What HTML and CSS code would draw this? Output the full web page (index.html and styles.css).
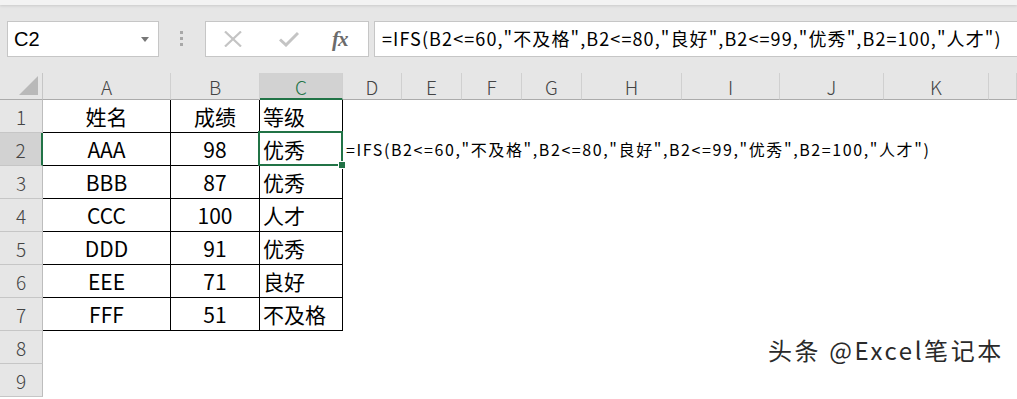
FILE: index.html
```html
<!DOCTYPE html>
<html lang="zh-CN">

<head>
    <meta charset="UTF-8">
    <meta name="viewport" content="width=device-width, initial-scale=1.0">
    <title>IFS 函数</title>
    <link rel="stylesheet" href="styles.css">
</head>

<body>
    <div class="ribbon-edge"></div>
    <div class="toolbar">
        <div class="namebox">
            <span>C2</span>
            <svg class="caret" width="8" height="5" viewBox="0 0 8 5"><path d="M0 0h8L4 5z" fill="#777"/></svg>
        </div>
        <div class="grip">
            <svg width="4" height="16" viewBox="0 0 4 16">
                <rect x="0" y="0" width="3" height="3" fill="#a8a8a8"/>
                <rect x="0" y="6" width="3" height="3" fill="#a8a8a8"/>
                <rect x="0" y="12" width="3" height="3" fill="#a8a8a8"/>
            </svg>
        </div>
        <div class="fxbox">
            <svg class="icon-x" width="18" height="16" viewBox="0 0 18 16"><path d="M1 0.5L17 15.5M17 0.5L1 15.5" stroke="#c4c4c4" stroke-width="2.2"/></svg>
            <svg class="icon-ok" width="20" height="16" viewBox="0 0 20 16"><path d="M1 8.5L7 14L19 2" stroke="#c4c4c4" stroke-width="3" fill="none"/></svg>
            <span class="fx">fx</span>
        </div>
        <div class="formula">=IFS(B2&lt;=60,"不及格",B2&lt;=80,"良好",B2&lt;=99,"优秀",B2=100,"人才")</div>
    </div>

    <div class="sheet" id="sheet"></div>

    <div class="watermark">头条 @Excel笔记本</div>

    <script>
        const sheet = document.getElementById('sheet');
        const columns = ['A', 'B', 'C', 'D', 'E', 'F', 'G', 'H', 'I', 'J', 'K', 'L'];
        const data = [
            ['姓名', '成绩', '等级'],
            ['AAA', '98', '优秀'],
            ['BBB', '87', '优秀'],
            ['CCC', '100', '人才'],
            ['DDD', '91', '优秀'],
            ['EEE', '71', '良好'],
            ['FFF', '51', '不及格'],
            [],
            []
        ];
        const formulaText = '=IFS(B2<=60,"不及格",B2<=80,"良好",B2<=99,"优秀",B2=100,"人才")';

        function addCell(cls, text) {
            const el = document.createElement('div');
            el.className = cls;
            if (text) el.textContent = text;
            sheet.appendChild(el);
            return el;
        }

        // column headers
        addCell('corner', '');
        columns.forEach((col) => {
            addCell(col === 'C' ? 'col-head active' : 'col-head', col === 'L' ? '' : col);
        });

        // rows
        data.forEach((row, r) => {
            const rowNum = r + 1;
            addCell(rowNum === 2 ? 'row-head active' : 'row-head', String(rowNum));
            for (let c = 0; c < columns.length; c++) {
                if (rowNum === 2 && c === 3) {
                    const spill = addCell('cell spill', formulaText);
                    spill.style.gridColumn = 'span ' + (columns.length - 3);
                    break;
                }
                let cls = 'cell';
                if (c < 3 && rowNum <= 7) cls += ' boxed';
                if (c < 2) cls += ' center';
                if (c === 2) cls += ' left';
                if (rowNum === 2 && c === 2) cls += ' selected';
                const cell = addCell(cls, row[c] || '');
                if (rowNum === 2 && c === 2) {
                    const handle = document.createElement('span');
                    handle.className = 'fill-handle';
                    cell.appendChild(handle);
                }
            }
        });
    </script>
</body>

</html>
```

FILE: styles.css
```css
body {
    margin: 0;
    width: 1017px;
    height: 399px;
    overflow: hidden;
    position: relative;
    background: #fff;
    font-family: "Noto Sans CJK SC", "Liberation Sans", sans-serif;
    color: #000;
}

.ribbon-edge {
    height: 5px;
    background: #f3f3f3;
    box-shadow: 0 1px 3px rgba(0, 0, 0, 0.12);
    position: relative;
}

.toolbar {
    height: 68px;
    box-sizing: border-box;
    padding-top: 16px;
    background: #e6e6e6;
    display: flex;
    align-items: flex-start;
}

.namebox {
    margin-left: 7px;
    width: 152px;
    height: 36px;
    box-sizing: border-box;
    background: #fff;
    border: 1px solid #c6c6c6;
    display: flex;
    align-items: center;
    justify-content: space-between;
    padding: 0 9px 0 6px;
    font-family: "Liberation Sans", sans-serif;
    font-size: 20px;
}

.grip {
    width: 46px;
    height: 36px;
    display: flex;
    align-items: center;
    justify-content: center;
}

.fxbox {
    width: 164px;
    height: 36px;
    box-sizing: border-box;
    background: #fff;
    border: 1px solid #c6c6c6;
    display: flex;
    align-items: center;
    padding-left: 18px;
}

.icon-x {
    margin-right: 37px;
}

.icon-ok {
    margin-right: 33px;
}

.fx {
    font-family: "Liberation Serif", serif;
    font-style: italic;
    font-weight: bold;
    font-size: 21px;
    color: #6b6b6b;
    letter-spacing: -1px;
}

.formula {
    flex: 1;
    margin-left: 5px;
    height: 36px;
    box-sizing: border-box;
    background: #fff;
    border: 1px solid #c6c6c6;
    border-right: none;
    padding-left: 7px;
    font-size: 18px;
    letter-spacing: 1.1px;
    line-height: 33px;
    white-space: nowrap;
    overflow: hidden;
}

.sheet {
    display: grid;
    grid-template-columns: 43px 128px 89px 83px 59px 60px 60px 60px 100px 98px 104px 105px 1fr;
    grid-template-rows: 27px repeat(9, 33px);
}

.corner,
.col-head,
.row-head {
    background: #e6e6e6;
    box-sizing: border-box;
    color: #444;
    font-size: 19px;
    font-weight: 300;
    display: flex;
    align-items: center;
    justify-content: center;
}

.corner {
    border-right: 1px solid #c6c6c6;
    border-bottom: 1px solid #ababab;
    position: relative;
}

.corner::after {
    content: "";
    position: absolute;
    right: 4px;
    bottom: 4px;
    border-style: solid;
    border-width: 0 0 19px 19px;
    border-color: transparent transparent #b9b9b9 transparent;
}

.col-head {
    border-right: 1px solid #d0d0d0;
    border-bottom: 1px solid #ababab;
    padding-top: 1px;
}

.col-head.active {
    background: #d2d2d2;
    color: #217346;
    border-bottom: 2px solid #217346;
}

.row-head {
    border-right: 1px solid #bdbdbd;
    border-bottom: 1px solid #c6c6c6;
}

.row-head.active {
    background: #d2d2d2;
    border-right: 2px solid #217346;
}

/* gridlines are turned off in the sheet, only the table has borders */
.cell {
    box-sizing: border-box;
    border-right: 1px solid #fff;
    border-bottom: 1px solid #fff;
    font-size: 21px;
    display: flex;
    align-items: center;
    white-space: nowrap;
}

.cell.boxed {
    border-right-color: #000;
    border-bottom-color: #000;
}

.cell.center {
    justify-content: center;
}

.cell.left {
    padding-left: 3px;
}

.cell.spill {
    font-size: 16px;
    letter-spacing: 1.6px;
    padding-left: 3px;
    border-right: none;
}

.cell.selected {
    position: relative;
}

.cell.selected::after {
    content: "";
    position: absolute;
    left: -2px;
    top: -2px;
    right: -1px;
    bottom: -1px;
    border: 2px solid #217346;
}

.fill-handle {
    position: absolute;
    right: -4px;
    bottom: -4px;
    width: 6px;
    height: 6px;
    background: #217346;
    border: 1px solid #fff;
    z-index: 2;
}

.watermark {
    position: absolute;
    left: 768px;
    top: 332px;
    font-size: 24px;
    letter-spacing: 2.6px;
    color: #2a2a2a;
    text-shadow: 1px 1px 0 #fff, -1px -1px 0 #fff;
}
```
